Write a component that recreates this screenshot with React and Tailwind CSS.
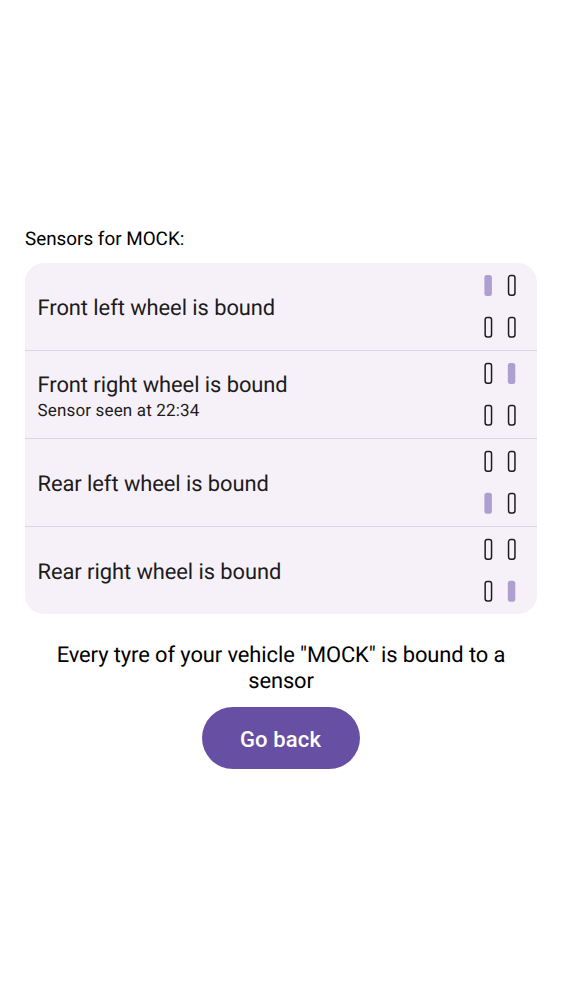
const wheels = [
  { name: "Front left", bound: 0 },
  { name: "Front right", bound: 1, seen: "22:34" },
  { name: "Rear left", bound: 2 },
  { name: "Rear right", bound: 3 },
];

function WheelMap({ bound }) {
  return (
    <svg className="h-[88px] w-[33px] shrink-0" viewBox="0 0 33 88" fill="none">
      {[0, 1, 2, 3].map((i) => {
        const x = i % 2 ? 23.8 : 0.4;
        const y = i < 2 ? 12 : 53.8;
        return i === bound ? (
          <rect key={i} x={x} y={y} width="7.5" height="21" rx="2.5" fill="#ad9fd0" />
        ) : (
          <rect key={i} x={x + 0.75} y={y + 0.6} width="6.4" height="19.6" rx="2.2" stroke="#1d1b20" strokeWidth="1.5" />
        );
      })}
    </svg>
  );
}

export default function App() {
  return (
    <main className="flex h-[1000px] w-[562px] flex-col bg-white px-[25px] pt-[226px] font-['Roboto',sans-serif] text-black [text-rendering:geometricPrecision]">
      <h1 className="text-[18.85px] leading-[26px]">Sensors for MOCK:</h1>
      <ul className="mt-[11px] h-[351px] overflow-hidden rounded-[19px] bg-[#f6f1f9] text-[#1d1b20]">
        {wheels.map((w, i) => (
          <li key={w.name} className={`flex h-[88px] items-center justify-between border-b pr-5 pl-[12.5px] ${i < 3 ? "border-[#dbd5e0]" : "border-transparent"}`}>
            <div className="pt-1">
              <p className="text-[21.9px] leading-[29px] tracking-[-0.06px]">{w.name} wheel is bound</p>
              {w.seen && <p className="text-[17px] leading-[22px] tracking-[0.16px]">Sensor seen at {w.seen}</p>}
            </div>
            <WheelMap bound={w.bound} />
          </li>
        ))}
      </ul>
      <p className="mt-[29px] text-center text-[21.9px] leading-[26px] tracking-[-0.09px]">
        Every tyre of your vehicle "MOCK" is bound to a<br />sensor
      </p>
      <button className="mt-3 h-[62px] w-[157.5px] self-center rounded-full bg-[#6750a4] pt-0.5 pr-[7px] text-[22px] font-medium tracking-[0.15px] text-white pl-1.5">
        Go back
      </button>
    </main>
  );
}
